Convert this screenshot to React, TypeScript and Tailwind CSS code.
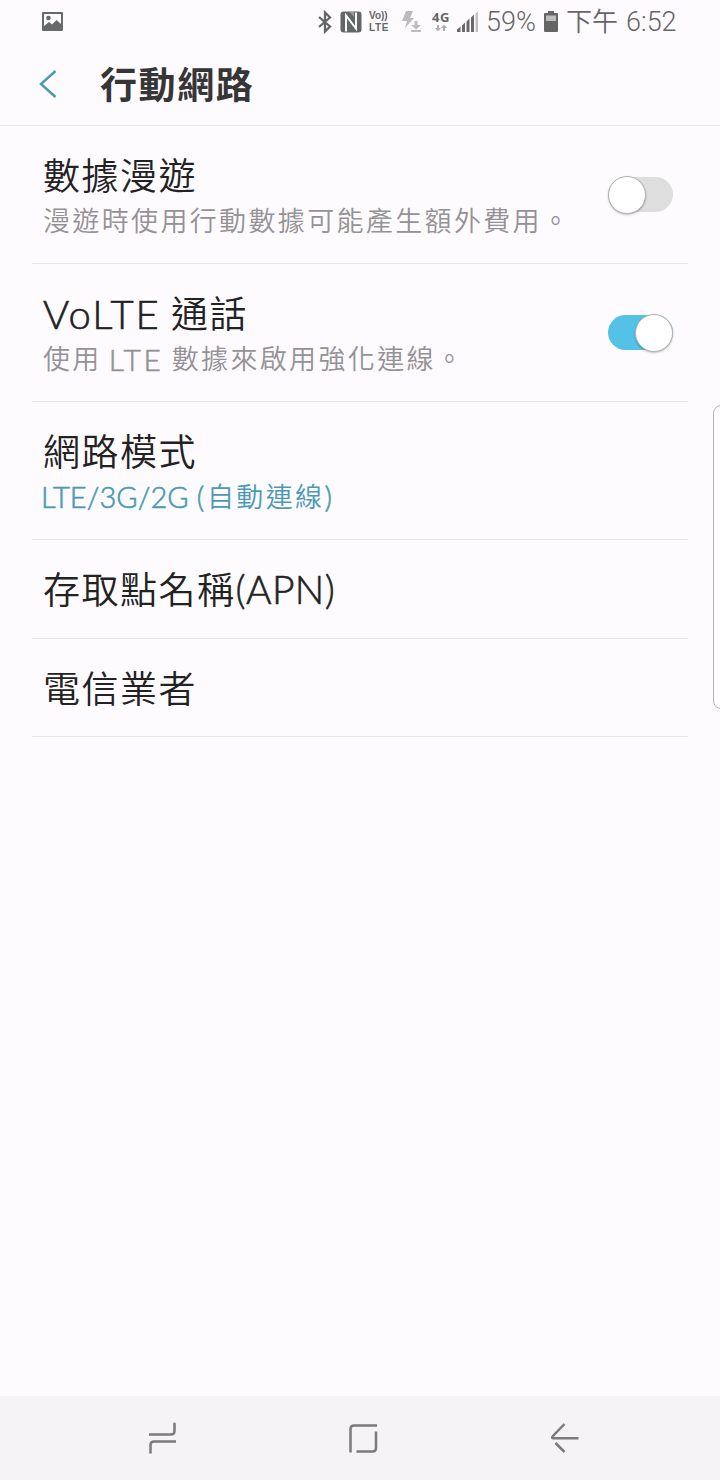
import React from 'react';
import clsx from 'clsx';

function StatusBar() {
  return (
    <div className="flex h-[43px] items-center pl-[41px] text-[#666666]">
      <svg className="h-5 w-[22px]" viewBox="0 0 22 20">
        <path
          fill="#666b69"
          fillRule="evenodd"
          d="M2 0H21Q22 0 22 1V18Q22 19 21 19H2Q1 19 1 18V1Q1 0 2 0ZM3 2V14L8 10L11 12.500L15.500 8L20 12V2Z"
        />
        <circle cx="7.5" cy="6" r="2.3" fill="#666b69" />
      </svg>

      {/* bluetooth */}
      <svg className="ml-[254px] h-6 w-4" viewBox="0 0 16 24" fill="none" stroke="#626665" strokeWidth="2.3">
        <path d="M2 7L13 16.5L8 21.5V2.5L13 7.5L2 17" />
      </svg>

      {/* nfc */}
      <svg className="ml-[7px] h-[22px] w-[22px]" viewBox="0 0 22 22">
        <rect x=".5" y=".5" width="21" height="21" rx="3" fill="#626665" />
        <path d="M6 20.500V4.500L16 17.500V1.500" fill="none" stroke="#fefbff" strokeWidth="2" />
        <path d="M6 1L9.500 1L14 6V1H16" fill="#fefbff" opacity=".35" />
      </svg>

      <div className="ml-[7px] flex w-[23px] flex-col font-['Liberation_Sans',sans-serif] font-bold">
        <span className="text-[10px] leading-[11.500px] tracking-normal whitespace-nowrap">Vo))</span>
        <span className="text-[10px] leading-[11.500px] tracking-[0.6px]">LTE</span>
      </div>

      {/* data saver */}
      <svg className="ml-2.5 h-[22px] w-[20px]" viewBox="0 0 20 22" fill="#bdbbbe">
        <path d="M4 0H11L8 7H12L3 17L5 10H0Z" />
        <path d="M12.500 10H15.500V14H19L14 18.500L9 14H12.500ZM9 19H19V21H9Z" />
      </svg>

      <div className="ml-[9px] flex w-5 flex-col items-center">
        <span className="font-['Open_Sans',sans-serif] text-[13px] leading-[13px] font-bold tracking-[0.5px]">4G</span>
        <svg className="h-[8px] w-[12px]" viewBox="0 0 12 8" fill="#b0aeb1">
          <path d="M2 1H4V4H6L3 7.500L0 4H2ZM8 7V4H6L9 .5L12 4H10V7Z" />
        </svg>
      </div>

      <svg className="ml-[6px] h-[22px] w-[22px]" viewBox="0 0 22 22" fill="#696969">
        <path d="M0 18.500L3.500 15.500V21H0ZM5 14.500L8 11.500V21H5ZM9.500 10.500L12.500 7.500V21H9.500ZM14 6.500L17 3.500V21H14Z" />
        <path fill="#c1bfc2" d="M18.500 2.500L21 .5V21H18.500Z" />
      </svg>

      <span className="mt-[2px] ml-[7px] w-[51px] font-['Roboto',sans-serif] text-[27px] leading-none font-light whitespace-nowrap">
        59%
      </span>
      <svg className="ml-[7px] h-[22px] w-[14px]" viewBox="0 0 14 22">
        <path fill="#656565" d="M4 0H10V2H13Q14 2 14 3V20Q14 21 13 21H1Q0 21 0 20V3Q0 2 1 2H4Z" />
        <path fill="#bdbbbe" d="M2 4.500H12V10H2Z" />
      </svg>
      <span className="-mt-[3px] ml-[8px] w-[53px] font-['Noto_Sans_CJK_TC',sans-serif] text-[26px] leading-none font-[350] whitespace-nowrap">
        下午
      </span>
      <span className="mt-[2px] ml-[7px] font-['Roboto',sans-serif] text-[27px] leading-none font-light">6:52</span>
    </div>
  );
}

function Header() {
  return (
    <header className="flex h-[83px] items-center border-b border-[#e9e6ea] pl-[39px]">
      <svg className="h-[28px] w-[18px]" viewBox="0 0 18 28" fill="none" stroke="#4b9ab5" strokeWidth="2.5">
        <path d="M16.500 1L2 14L16.500 27" />
      </svg>
      <h1 className="-mt-px ml-[43px] font-['Noto_Sans_CJK_TC',sans-serif] text-[37px] leading-none font-bold tracking-[1.6px] text-[#363636]">
        行動網路
      </h1>
    </header>
  );
}

function Toggle({ on }: { on: boolean }) {
  return (
    <div
      role="switch"
      aria-checked={on}
      className={clsx(
        'flex h-[35px] w-[65px] shrink-0 items-center rounded-full',
        on ? 'justify-end bg-[#54c2e6]' : 'justify-start bg-[#dedede]'
      )}
    >
      <div className="h-[38px] w-[38px] shrink-0 rounded-full border border-[#b4b4b4] bg-white shadow-[0_1px_2px_rgba(0,0,0,0.25)]" />
    </div>
  );
}

// Latin runs sit next to the CJK text, a little heavier than Lato's light cut
function Latin({ className, children }: { className: string; children: React.ReactNode }) {
  return (
    <span className={clsx("font-['Lato',sans-serif] font-light [-webkit-text-stroke:0.6px_currentColor]", className)}>
      {children}
    </span>
  );
}

type RowProps = {
  title: React.ReactNode;
  summary?: React.ReactNode;
  active?: boolean;
  toggle?: boolean;
};

function Row({ title, summary, active, toggle }: RowProps) {
  return (
    <li
      className={clsx(
        'mx-8 flex items-center justify-between border-b border-[#e8e4e8] pr-[15px] pl-[11px]',
        summary ? 'h-[138px]' : 'h-[98.500px]'
      )}
    >
      <div className={clsx('flex flex-col whitespace-nowrap', summary && 'pt-[4px]')}>
        <span className="flex h-[46px] items-center text-[37px] leading-none font-[350] tracking-[1.5px] text-[#222222]">
          {title}
        </span>
        {summary && (
          <span
            className={clsx(
              'flex h-[44px] items-center text-[27px] leading-none font-[350] tracking-[2.35px]',
              active ? 'text-[#4b9ab5]' : 'text-[#949294]'
            )}
          >
            {summary}
          </span>
        )}
      </div>
      {toggle !== undefined && <Toggle on={toggle} />}
    </li>
  );
}

function NavBar() {
  return (
    <nav className="flex h-[84px] items-center bg-[#f6f3f7]">
      <svg className="ml-[148px] h-8 w-[29px]" viewBox="0 0 29 32" fill="none" stroke="#7c7a7d" strokeWidth="2.500">
        <path d="M1 12.500H23Q26.500 12.500 26.500 9V.8M28 19.500H6Q2.500 19.500 2.500 23V31.500" />
      </svg>
      <svg className="ml-[171px] h-[30px] w-[30px]" viewBox="0 0 30 30" fill="none" stroke="#7c7a7d" strokeWidth="2.500">
        <path d="M29 2.500H6Q2.500 2.500 2.500 6V29.500M8.500 28.500H24.500Q28 28.500 28 25V8.500" />
      </svg>
      <svg className="ml-[172px] h-[30px] w-[29px]" viewBox="0 0 29 30" fill="none" stroke="#7c7a7d" strokeWidth="2.500">
        <path d="M14.500 1L2.500 13.500Q1.500 15.300 3.500 15.300H28.500M5.500 20L14.500 29" />
      </svg>
    </nav>
  );
}

export default function App() {
  return (
    <div
      lang="zh-Hant"
      className="relative flex h-[1480px] w-[720px] flex-col overflow-hidden bg-[#fefbff] font-['Noto_Sans_CJK_TC',sans-serif]"
    >
      <StatusBar />
      <Header />
      <ul>
        <Row title="數據漫遊" summary="漫遊時使用行動數據可能產生額外費用。" toggle={false} />
        <Row
          title={
            <>
              <Latin className="mt-[2px] w-[128px] text-[40px] tracking-[2px]">VoLTE</Latin>
              通話
            </>
          }
          summary={
            <>
              使用
              <Latin className="mt-[2px] ml-[7px] w-[63px] text-[30px] tracking-[2.6px]">LTE</Latin>
              數據來啟用強化連線。
            </>
          }
          toggle={true}
        />
        <Row
          title="網路模式"
          summary={
            <>
              <Latin className="mt-[2px] -ml-[2px] w-[166px] text-[29px] tracking-[0.1px]">LTE/3G/2G (</Latin>
              自動連線
              <Latin className="mt-[2px] text-[29px] tracking-normal">)</Latin>
            </>
          }
          active
        />
        <Row
          title={
            <>
              存取點名稱
              <Latin className="mt-[2px] text-[39px] tracking-[0.4px]">(APN)</Latin>
            </>
          }
        />
        <Row title="電信業者" />
      </ul>
      <div className="flex-1" />
      <NavBar />

      {/* edge panel handle */}
      <div className="absolute top-[405px] -right-[12px] h-[304px] w-[19px] rounded-[8px] border border-[#b4b2b5] bg-white" />
    </div>
  );
}
